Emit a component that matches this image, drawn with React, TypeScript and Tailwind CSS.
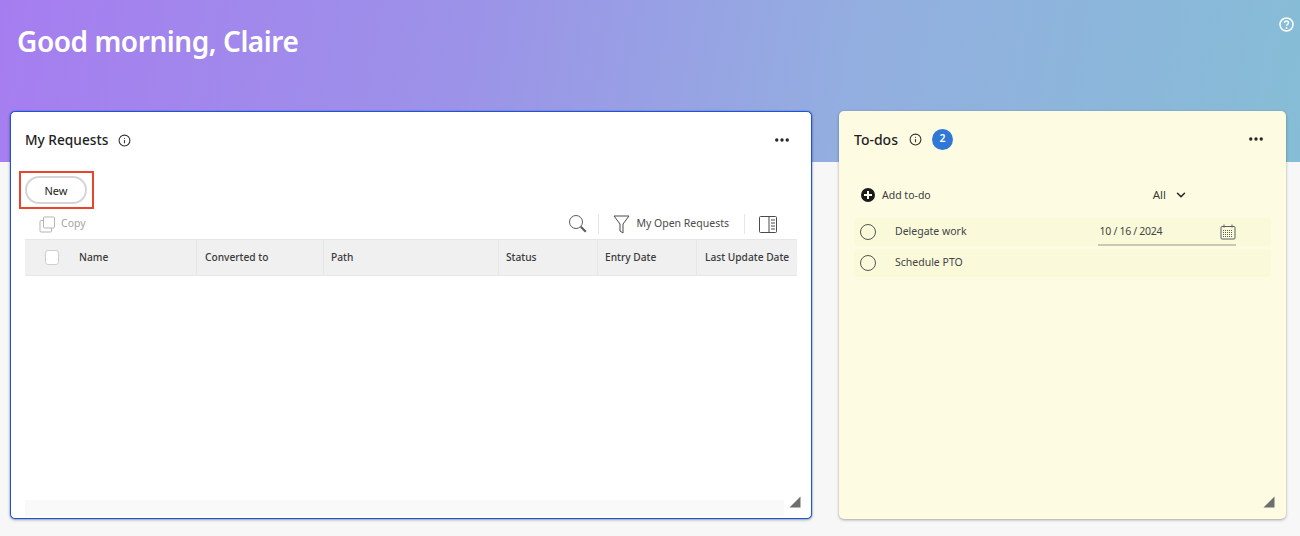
import React from 'react';
import { MoreHorizontal, Info, ChevronDown } from 'lucide-react';

const columns = [
  { label: 'Name', width: 'w-[172px] pl-[54px]' },
  { label: 'Converted to', width: 'w-[127px] pl-[8px]' },
  { label: 'Path', width: 'w-[175px] pl-[7px]' },
  { label: 'Status', width: 'w-[99px] pl-[7px]' },
  { label: 'Entry Date', width: 'w-[99px] pl-[7px]' },
  { label: 'Last Update Date', width: 'w-[100px] pl-[8px]' },
];

const ResizeGrip = () => (
  <svg width="12" height="12" viewBox="0 0 12 12">
    <path d="M11.500 0.500V11.500H0.500Z" fill="#6e6e6e" />
  </svg>
);

const CalendarIcon = () => (
  <svg width="16" height="16" viewBox="0 0 16 16" fill="none" stroke="#5f5f5f" strokeWidth="1">
    <rect x="1" y="2.500" width="14" height="12.500" rx="1" />
    <path d="M4 0.500v3M12 0.500v3" />
    <path d="M3 6.500h10M3 8.500h10M3 10.500h10M3 12.500h10" strokeDasharray="1 1" />
  </svg>
);

const App: React.FC = () => {
  return (
    <div className="h-[536px] w-[1300px] overflow-hidden bg-[#f7f7f7] font-['Noto_Sans',sans-serif] text-[#2c2c2c]">
      <header className="flex h-[162px] items-start justify-between bg-[linear-gradient(100deg,#a67df0_0%,#9c92e8_35%,#93aee0_65%,#86bdd6_100%)] pl-[17px] pr-[6px]">
        <h1 className="mt-[22px] text-[28px] leading-[38px] font-semibold tracking-[-0.45px] text-white">Good morning, Claire</h1>
        <svg width="15" height="15" viewBox="0 0 15 15" fill="none" className="mt-[17px]">
          <circle cx="7.500" cy="7.500" r="6.500" stroke="white" strokeWidth="1.500" />
          <path d="M5.500 6c0-2.600 4-2.600 4 0 0 1.300-2 1.400-2 2.800" stroke="white" strokeWidth="1.400" />
          <circle cx="7.500" cy="11" r="0.900" fill="white" />
        </svg>
      </header>

      <main className="mt-[-51px] flex items-start pl-[10px]">
        {/* My Requests */}
        <section className="relative flex h-[408px] w-[802px] flex-col rounded-[5px] border border-[#1b55d8] bg-white shadow-[0_0_1px_#1b55d8,0_1px_3px_rgba(0,0,0,0.35)]">
          <div className="flex h-[56px] shrink-0 items-center pl-[14px] pr-[20px]">
            <h2 className="text-[13.7px] font-medium text-[#1f1f1f]">My Requests</h2>
            <Info size={13} className="ml-[10px] text-[#333]" />
            <MoreHorizontal size={18} strokeWidth={2.500} className="ml-auto text-[#222]" />
          </div>

          <div className="mt-[3px] ml-[8px] flex h-[38px] w-[75px] shrink-0 items-center border-2 border-[#e8452c] pl-[4px]">
            <button className="h-[28px] w-[62px] rounded-full border-2 border-[#d5d5d5] bg-white pt-[2px] text-[11px] text-[#222]">New</button>
          </div>

          <div className="flex h-[30px] shrink-0 items-center pl-[28px] pr-[34px]">
            <svg width="17" height="17" viewBox="0 0 17 17" fill="none" stroke="#b5b5b5">
              <rect x="4.500" y="1" width="11" height="11" rx="1" />
              <path d="M4.500 4.500H2a1 1 0 0 0-1 1V15a1 1 0 0 0 1 1h9.500a1 1 0 0 0 1-1v-3" />
            </svg>
            <span className="ml-[5px] text-[10.5px] text-[#a3a3a3]">Copy</span>
            <svg width="20" height="20" viewBox="0 0 20 20" fill="none" stroke="#5a5a5a" className="ml-auto">
              <circle cx="8" cy="8" r="6.500" />
              <path d="M12.800 12.800l5 5" strokeWidth="2" />
            </svg>
            <div className="ml-[10px] h-[20px] w-px bg-[#e6e6e6]" />
            <svg width="17" height="19" viewBox="0 0 17 19" fill="none" stroke="#4b4b4b" className="ml-[14px]">
              <path d="M1 1h15L10 9v9l-3-2V9Z" />
            </svg>
            <span className="ml-[6px] text-[10.5px] text-[#4b4b4b]">My Open Requests</span>
            <div className="ml-[15px] h-[20px] w-px bg-[#e6e6e6]" />
            <svg width="18" height="17" viewBox="0 0 18 17" fill="none" stroke="#4b4b4b" className="ml-[14px]">
              <rect x="0.500" y="0.500" width="17" height="16" rx="1" />
              <path d="M10 0.500v16M12 4h4M12 7h4M12 10h4M12 13h4" />
            </svg>
          </div>

          <div className="relative ml-[14px] flex h-[37px] w-[772px] shrink-0 border-y border-[#e6e6e6] bg-[#f0f0f0]">
            {columns.map((col, i) => (
              <div key={col.label} className={`flex items-center pt-[1px] ${col.width} ${i < columns.length - 1 ? 'border-r border-[#e6e6e6]' : ''} text-[10.2px] font-medium whitespace-nowrap text-[#3a3a3a]`}>
                {col.label}
              </div>
            ))}
            <div className="absolute left-[20px] top-[10px] h-[15px] w-[14px] rounded-[3px] border border-[#cfcfcf] bg-white" />
          </div>

          <div className="mt-auto mb-[2px] ml-[14px] h-[16px] w-[759px] bg-[#f9f9f9]" />
          <div className="absolute right-[10px] bottom-[10px] h-[12px] w-[12px]"><ResizeGrip /></div>
        </section>

        {/* To-dos */}
        <section className="relative ml-[27px] flex h-[408px] w-[447px] flex-col rounded-[5px] bg-[#fdfbe2] shadow-[0_1px_3px_rgba(0,0,0,0.35)]">
          <div className="flex h-[56px] items-center pl-[15px] pr-[21px]">
            <h2 className="text-[14px] font-medium text-[#1f1f1f]">To-dos</h2>
            <Info size={13} className="ml-[11px] text-[#333]" />
            <span className="ml-[10px] flex h-[21px] w-[21px] items-center justify-center rounded-full bg-[#2f78d6] text-[10.5px] font-semibold text-white">2</span>
            <MoreHorizontal size={18} strokeWidth={2.500} className="ml-auto text-[#222]" />
          </div>

          <div className="mt-[10px] flex h-[36px] items-center pl-[22px]">
            <svg width="14" height="14" viewBox="0 0 14 14">
              <circle cx="7" cy="7" r="7" fill="#1a1a1a" />
              <path d="M7 3v8M3 7h8" stroke="#fcfbe3" strokeWidth="2" />
            </svg>
            <span className="ml-[7px] pt-[1px] text-[10.5px] text-[#3c3c3c]">Add to-do</span>
            <span className="ml-[222px] text-[11.5px] text-[#3c3c3c]">All</span>
            <ChevronDown size={14} strokeWidth={2.500} className="ml-[8px] text-[#222]" />
          </div>

          <div className="mt-[5px] flex flex-col gap-[3px] px-[15px]">
            <div className="flex h-[28px] items-center rounded-[3px] bg-[#fafadb] pl-[6px]">
              <span className="h-[16px] w-[16px] rounded-full border border-[#555]" />
              <span className="ml-[19px] text-[10.5px] text-[#444]">Delegate work</span>
              <div className="ml-[131px] flex h-[28px] w-[138px] items-center justify-between border-b-2 border-[#c9c9b5] pl-[2px] pt-[1px]">
                <span className="text-[10.5px] tracking-[-0.3px] text-[#444]">10 / 16 / 2024</span>
                <CalendarIcon />
              </div>
            </div>
            <div className="flex h-[28px] items-center rounded-[3px] bg-[#fafadb] pl-[6px]">
              <span className="h-[16px] w-[16px] rounded-full border border-[#555]" />
              <span className="ml-[19px] text-[10.5px] text-[#444]">Schedule PTO</span>
            </div>
          </div>

          <div className="absolute right-[11px] bottom-[11px] h-[12px] w-[12px]"><ResizeGrip /></div>
        </section>
      </main>
    </div>
  );
};

export default App;
